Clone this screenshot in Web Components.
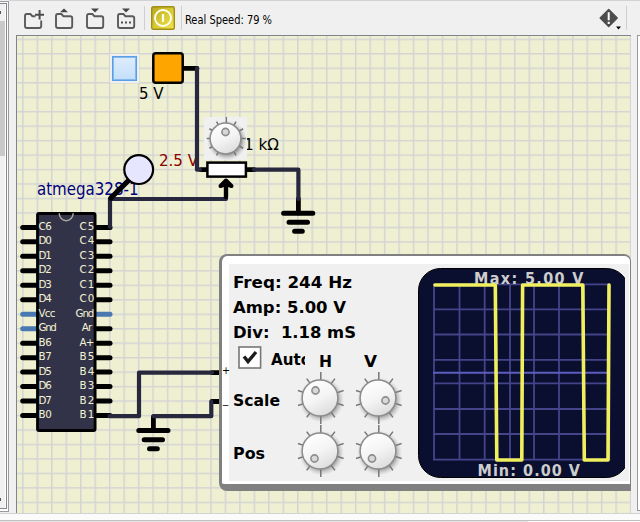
<!DOCTYPE html>
<html lang="en">
<head>
<meta charset="utf-8">
<title>Circuit simulator</title>
<style>
html,body{margin:0;height:100%;overflow:hidden;background:#f0f0f0;font-family:"DejaVu Sans Condensed","DejaVu Sans",sans-serif}
</style>
</head>
<body>
<sim-app></sim-app>
<script>
function define(name, render) {
  customElements.define(name, class extends HTMLElement {
    connectedCallback() {
      if (this.shadowRoot) return;
      this.attachShadow({ mode: 'open' }).innerHTML = render(this);
    }
  });
}
const num = (el, k, d = 0) => el.hasAttribute(k) ? parseFloat(el.getAttribute(k)) : d;
const FONT = "font-family:'DejaVu Sans Condensed','DejaVu Sans',sans-serif";

/* One line of text set to an exact width. */
define('fit-label', el => {
  const w = num(el, 'w'), s = num(el, 'size', 12), h = Math.ceil(s * 1.2);
  return `<style>:host{display:block;width:${w}px;height:${h}px}svg{display:block;overflow:visible}text{${FONT};font-size:${s}px;font-weight:${el.getAttribute('weight') || 400};fill:${el.getAttribute('color') || '#000'};white-space:pre}</style>
  <svg width="${w}" height="${h}"><text x="0" y="${s}" textLength="${w}" lengthAdjust="spacingAndGlyphs">${el.getAttribute('text')}</text></svg>`;
});

/* Places a part on the schematic. */
define('place-at', el => `<style>:host{position:absolute;left:${num(el, 'x') - 17}px;top:${num(el, 'y') - 36}px}</style><slot></slot>`);

define('folder-icon', el => {
  const kind = el.getAttribute('kind');
  const base = 'M1 14Q1 12 2.8 12H6.4L8.4 14.2H15.2Q17.2 14.2 17.2 16V24Q17.2 26 15.2 26H3Q1 26 1 24Z';
  const cut = 'M11.5 14.2H8.4L6.4 12H2.8Q1 12 1 14V24Q1 26 3 26H15.2Q17.2 26 17.2 24V18.5';
  const extra = { add: '<path d="M15.6 8v9.4M11 12.7h9" stroke="#4d4d4d" stroke-width="2"/>',
    up: '<path d="M5 10.2 9 6.4l4 3.8Z" fill="#454545"/>',
    down: '<path d="M5 6.6 9 10.4l4-3.8Z" fill="#454545"/>',
    more: '<path d="M5 6.6 9 10.4l4-3.8Z" fill="#454545"/><path d="M4 20.5h2M8 20.5h2M12 20.5h2" stroke="#505050" stroke-width="2"/>' }[kind];
  return `<style>:host{display:block;width:20px;height:30px}svg{display:block;overflow:visible}</style>
  <svg width="20" height="30" fill="none"><path d="${kind === 'add' ? cut : base}" stroke="#5a5a5a" stroke-width="1.9"/>${extra}</svg>`;
});

define('power-button', () => `<style>:host{display:block;width:24px;height:24px}svg{display:block}</style>
<svg width="24" height="24"><defs><linearGradient id="g" x1="0" y1="0" x2="1" y2="1"><stop offset="0" stop-color="#b9a71c"/><stop offset=".5" stop-color="#d8c935"/><stop offset="1" stop-color="#f3e44c"/></linearGradient></defs>
<rect x=".7" y=".7" width="22.6" height="22.6" rx="1.5" fill="url(#g)" stroke="#a08e15" stroke-width="1.4"/>
<circle cx="12" cy="12" r="8" fill="none" stroke="#fffff2" stroke-width="1.9"/><path d="M12 8v8" stroke="#fffff2" stroke-width="2.2"/></svg>`);

define('alert-icon', () => `<style>:host{display:block;width:26px;height:24px}svg{display:block}</style>
<svg width="26" height="24"><path d="M9.7 1.5 18.2 10 9.7 18.5 1.2 10Z" fill="#4d4d4d" stroke="#4d4d4d" stroke-width="1.5" stroke-linejoin="round"/><path d="M9.7 4.2v8M9.7 13.8v2.2" stroke="#fff" stroke-width="2"/><path d="M17 18.5h5l-2.5 3Z" fill="#000"/></svg>`);

define('tool-bar', () => `<style>
:host{display:flex;align-items:flex-start;height:35px;box-sizing:border-box;border-top:1px solid #d2d2d2;background:#f0f0f0;padding-left:15px}
folder-icon{margin:1px 11px 0 0}
i{width:1px;height:24px;background:#cfcfcf;margin-top:5px}
power-button{margin:5px 6px 0 6px}
fit-label{margin:10.5px 0 0 2.5px}
alert-icon{margin:7px 1px 0 auto}
i.end{margin-right:13px}
</style><folder-icon kind="add"></folder-icon><folder-icon kind="up"></folder-icon><folder-icon kind="down"></folder-icon><folder-icon kind="more"></folder-icon><i style="margin-left:-4px"></i><power-button></power-button><i></i><fit-label text="Real Speed: 79 %" size="11.5" w="87"></fit-label><alert-icon></alert-icon><i class="end"></i>`);

define('side-panel', () => `<style>
:host{display:flex;height:511px;margin-top:1px;box-sizing:border-box;border:solid #9a9a9a;border-width:1px 1px 1px 0;background:#fff}
.in{flex:1;display:flex;flex-direction:column;margin:1px 1px 2px 0;border:solid #7f8790;border-width:1px 1px 1px 0;padding-right:1px}
.b{height:17px;background:#f0f0f0;display:flex;align-items:center}
.b:before{content:"";width:1px;height:3px;background:#555}
.th{height:135px;background:#c9c9c9}.tr{flex:1;background:#f0f0f0}
</style><div class="in"><div class="b"></div><div class="th"></div><div class="tr"></div><div class="b"></div></div>`);

define('dial-knob', el => {
  const r = num(el, 'r', 18.5), step = num(el, 'step', 36), W = num(el, 'size', 52), c = W / 2, R = num(el, 'tick', 26);
  let t = '';
  for (let a = 0; a < 360; a += step) {
    if (step === 30 && a === 180) continue;
    const q = a * Math.PI / 180, s = Math.sin(q), k = -Math.cos(q);
    const o = a === 0 || a === 180 ? R : R - 2;
    t += `M${c + .8 + s * (r - 2)} ${c + k * (r - 2)}L${c + .8 + s * o} ${c + k * o}`;
  }
  return `<style>:host{display:block;width:${W}px;height:${W}px;background:#f0f0f0}svg{display:block;overflow:visible}</style>
  <svg width="${W}" height="${W}"><defs><radialGradient id="s"><stop offset=".72" stop-color="#888" stop-opacity=".75"/><stop offset="1" stop-color="#bbb" stop-opacity="0"/></radialGradient><linearGradient id="k" x1=".25" y1="0" x2=".75" y2="1"><stop offset="0" stop-color="#fff"/><stop offset=".5" stop-color="#f4f4f4"/><stop offset="1" stop-color="#dadada"/></linearGradient></defs>
  <circle cx="${c + 1.5}" cy="${c + 2}" r="${r + 4}" fill="url(#s)"/><path d="${t}" stroke="#777" stroke-width="1.5"/>
  <circle cx="${c}" cy="${c}" r="${r - .6}" fill="url(#k)" stroke="#8d8d8d" stroke-width="1.5"/>
  <circle cx="${c + num(el, 'dx')}" cy="${c + num(el, 'dy')}" r="3.6" fill="#d8d8d8" stroke="#8c8c8c" stroke-width="1.6"/></svg>`;
});

define('push-button', () => `<style>:host{display:block;box-sizing:border-box;width:29px;height:29px;border:2px solid #edf0ef;background:#edf0ef}div{box-sizing:border-box;width:25px;height:25px;border:1.5px solid #5a9fe4;box-shadow:inset 0 0 0 1px #84b9f0;background:linear-gradient(#deecfb,#c3dffb)}</style><div></div>`);

define('ic-chip', () => {
  const P = 14.47, L = 'C6 D0 D1 D2 D3 D4 Vcc Gnd B6 B7 D5 D6 D7 B0'.split(' '), R = 'C5 C4 C3 C2 C1 C0 Gnd Ar A+ B5 B4 B3 B2 B1'.split(' ');
  let pins = '', text = '';
  L.forEach((n, i) => {
    const y = 15.4 + P * i, blue = '#4a78b0';
    pins += `<path d="M2.7 ${y}H17" stroke="${i === 6 || i === 7 ? blue : '#000'}"/><path d="M77 ${y}H90" stroke="${i === 6 ? blue : '#000'}"/>`;
    const lw = { Vcc: 16.8, Gnd: 18.2 }[n] || 13.2, rn = R[i], rw = { Gnd: 18.8, Ar: 10.4, 'A+': 15 }[rn] || 15;
    text += `<text x="18.6" y="${y + 2.6}" textLength="${lw}">${n}</text><text x="${(rn === 'Ar' ? 72.2 : 74.4) - rw}" y="${y + 2.6}" textLength="${rw}">${rn}</text>`;
  });
  return `<style>:host{display:block;width:95px;height:222px}svg{display:block}text{font-family:'DejaVu Sans',sans-serif;font-size:10.3px;fill:#f2f2d4}</style>
  <svg width="95" height="222"><g stroke-width="5" stroke-linecap="round">${pins}</g><rect x="17.5" y="1.5" width="57.6" height="217" rx="1.5" fill="#323248" stroke="#000" stroke-width="2.8"/><path d="M39.2 1.2a7 7.6 0 0 0 14 0" fill="none" stroke="#aaa79d" stroke-width="1.5"/>${text}</svg>`;
});

define('scope-screen', () => {
  const xs = [434, 459.5, 484.7, 510, 534, 559, 584, 609.3], ys = [284.3, 309.3, 334.5, 359.8, 383.4, 409, 434, 459.6];
  const g = xs.map(x => `M${x} 283.5V460.5`).join('') + ys.map(y => `M433 ${y}H610`).join('');
  return `<style>:host{display:block;width:207px;height:210px}svg{display:block;overflow:visible}text{${FONT};font-size:16px;font-weight:700;fill:#cdcdcd}</style>
  <svg width="207" height="210" viewBox="418 268 207 210"><clipPath id="c"><rect x="418" y="268" width="207" height="210"/></clipPath><rect clip-path="url(#c)" x="418.5" y="268.5" width="210" height="209" rx="22" fill="#0a0f30" stroke="#000"/>
  <path d="${g}" stroke="#44448a" stroke-width="1.8"/><path d="M433 372.8H610" stroke="#5d5dbe" stroke-width="2"/>
  <text x="474" y="283.7" textLength="109.5">Max: 5.00 V</text><text x="477.5" y="476.2" textLength="102.5">Min: 0.00 V</text>
  <path d="M435 285H495.3L496.8 460H521.8L522.6 285H582.8L584.3 460H608L609 285" fill="none" stroke="#f0f05f" stroke-width="3.6" stroke-linecap="round" stroke-linejoin="round"/></svg>`;
});

define('check-box', () => `<style>:host{display:block;width:24px;height:23px}svg{display:block}</style><svg width="24" height="23"><rect x="1" y="1" width="21.6" height="21" fill="#fff" stroke="#777" stroke-width="1.6"/><path d="M6 10.5 10 15.5 18 6" fill="none" stroke="#1c1c1c" stroke-width="3.4"/></svg>`);

define('scope-panel', () => `<style>
:host{display:block;box-sizing:border-box;width:412px;height:237px;border:solid #808080;border-width:2px 1px 7px 3px;border-radius:8px 7px 0 8px;background:#fff;padding:8px 1px 3px 7px}
.body{display:flex;justify-content:space-between;height:217px;background:#f0f0f0}
.left{width:180px;padding-left:4px;padding-top:7px}
.read{display:grid;grid-auto-rows:25px}
.auto{display:flex;height:26px}
.auto>check-box{margin-left:5px}
.clip{overflow:hidden;width:34px;height:20px;margin:4px 14px 0 9px}
.hv{margin-top:5px}
.v{margin-left:32px}
.ctl{display:grid;grid-template-columns:60.7px 58.3px 58px;grid-template-rows:52.5px 53px}
.ctl fit-label{margin-top:17px}
scope-screen{margin:4px 4px 0 0}
</style><div class="body"><div class="left">
<div class="read"><fit-label text="Freq: 244 Hz" size="16.7" weight="700" w="119"></fit-label><fit-label text="Amp: 5.00 V" size="16.7" weight="700" w="113"></fit-label><fit-label text="Div:  1.18 mS" size="16.7" weight="700" w="123"></fit-label></div>
<div class="auto"><check-box></check-box><div class="clip"><fit-label text="Auto" size="15" weight="700" w="40"></fit-label></div><fit-label class="hv" text="H" size="16" weight="700" w="13"></fit-label><fit-label class="hv v" text="V" size="16" weight="700" w="13"></fit-label></div>
<div class="ctl"><fit-label text="Scale" size="16.5" weight="700" w="47"></fit-label><dial-knob dx="-4.5" dy="-7.5"></dial-knob><dial-knob dx="7.5" dy="2.5"></dial-knob><fit-label text="Pos" size="16.5" weight="700" w="32"></fit-label><dial-knob dx="-5.5" dy="7.5"></dial-knob><dial-knob dx="-6" dy="7.5"></dial-knob></div>
</div><scope-screen></scope-screen></div>`);

define('wire-layer', () => `<style>:host{display:block;width:614px;height:477px}svg{display:block}</style>
<svg width="614" height="477" viewBox="17 36 614 477" fill="none" stroke-linecap="round" stroke-linejoin="round">
<g stroke="#000" stroke-width="5"><path d="M184 68.4H197M201 169.7H208M246 169.7H254M298.4 199V213M212 372.6H220M212 401.5H220M153.4 417V430" stroke-width="4.8"/>
<path d="M283.6 213.2H312.8M289 222.3H307.5M294.6 231.3H302.3M138.8 430.6H168M144.2 439.7H162.5M149.5 448.8H157.3"/></g>
<rect x="153.3" y="53.3" width="29.4" height="29.4" rx="2.5" fill="#ffa500" stroke="#000" stroke-width="2.5"/>
<g stroke="#27273d" stroke-width="4.2"><path d="M197 68.4V169.7H200M254 169.7H298.4V199M110 227V199H226M109.5 416.2H139V372.6H212M153.4 416.2H211.3V401.5"/></g>
<path d="M226 197V184" stroke="#000" stroke-width="4.4"/><path d="M220.5 186 226 180.5 231.5 186 226 184Z" fill="#000" stroke="#000" stroke-width="4"/>
<rect x="207.4" y="162.6" width="38.5" height="14" fill="#fff" stroke="#000" stroke-width="2.5" stroke-linejoin="miter"/>
<path d="M110.8 198 129 180" stroke="#000" stroke-width="5.2"/><circle cx="138.7" cy="169.6" r="14.4" fill="#e6e6ff" stroke="#000" stroke-width="2.2"/></svg>`);

define('circuit-canvas', () => `<style>
:host{display:block;position:relative;overflow:hidden;width:614px;height:477px;border:solid #7f8590;border-width:1px 0 0 1px;background:#eff0d2}
.grid{display:block}
</style><svg class="grid" width="614" height="477"><defs><pattern id="p" x="5.1" y="2.6" width="14.47" height="14.47" patternUnits="userSpaceOnUse"><path d="M.75 0V14.47M0 .75H14.47" stroke="#d4d4d4" stroke-width="1.5"/></pattern></defs><rect width="614" height="477" fill="url(#p)"/></svg>
<place-at x="138.5" y="83"><fit-label text="5 V" size="16" w="24.5"></fit-label></place-at>
<place-at x="159" y="150"><fit-label text="2.5 V" size="16" w="39" color="#8b0000"></fit-label></place-at>
<place-at x="243.5" y="134"><fit-label text="1 kΩ" size="16" w="35"></fit-label></place-at>
<place-at x="37" y="178"><fit-label text="atmega328-1" size="17" w="101.5" color="#000080"></fit-label></place-at>
<place-at x="20" y="212"><ic-chip></ic-chip></place-at>
<place-at x="17" y="36"><wire-layer></wire-layer></place-at>
<place-at x="110" y="54"><push-button></push-button></place-at>
<place-at x="204" y="117"><dial-knob size="43" r="16" step="30" tick="21.5" dx="0" dy="-6.5"></dial-knob></place-at>
<place-at x="219" y="254"><scope-panel></scope-panel></place-at>
<place-at x="222" y="363"><fit-label text="+" size="11" w="8"></fit-label></place-at>
<place-at x="222" y="397"><fit-label text="–" size="11" w="7"></fit-label></place-at>`);

define('sim-app', () => `<style>
:host{display:grid;grid-template-columns:9px 1fr;grid-template-rows:513px 9px;width:640px;height:522px}
.work{display:flex;justify-content:space-between;padding-left:7px}
.dock{width:3px;height:476px;box-sizing:border-box;border:solid #999;border-width:1px 0 1px 1px;background:#fff}
.status{grid-column:1/3;display:flex;flex-direction:column;background:#fbfbfb;border-top:1px solid #d2d2d2}
.foot{height:1px;margin-top:auto;border-top:1px solid #c0c0c0;background:linear-gradient(90deg,#e6e6e6 528px,#fafafa 528px)}
</style><side-panel></side-panel><div><tool-bar></tool-bar><div class="work"><circuit-canvas></circuit-canvas><div class="dock"></div></div></div><div class="status"><div class="foot"></div></div>`);
</script>
</body>
</html>
